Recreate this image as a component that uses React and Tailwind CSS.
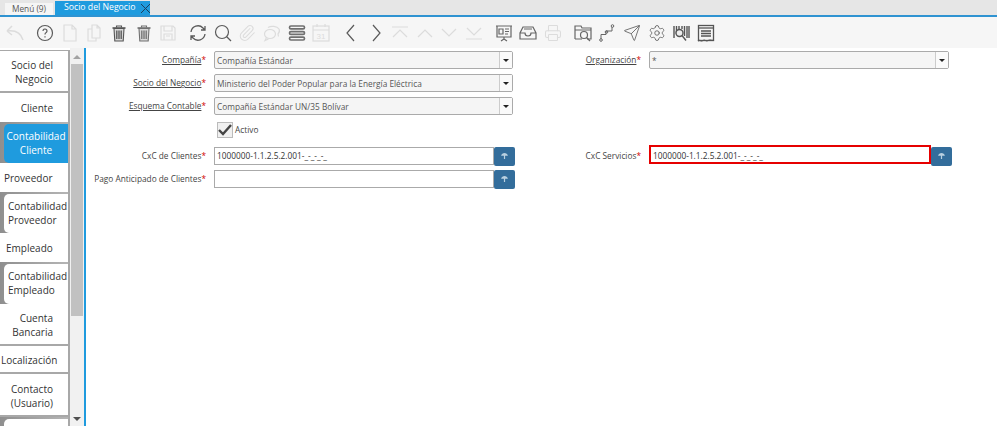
import React from "react";
import { Paperclip, Printer, Send, Settings } from "lucide-react";

const ACTIVE = "#5a5a5a";
const OFF = "#dcdcdc";

const Svg = ({ color = ACTIVE, w = 1.2, children }) => (
  <svg width="20" height="20" viewBox="0 0 20 20" fill="none" stroke={color} strokeWidth={w}>
    {children}
  </svg>
);

const Trash = ({ color }) => (
  <Svg color={color} w={1.1}>
    <path d="M3.500 5h13" strokeWidth="1.600" />
    <path d="M7.500 4.500V3h5v1.500" />
    <path d="M5 5.500l.8 12.500h8.400L15 5.500z" fill="#d8d8d8" />
    <path d="M7.800 7.500v8.500M10 7.500v8.500M12.200 7.500v8.500" strokeWidth="1.300" />
  </Svg>
);

const tools = [
  { icon: <Svg color={OFF} w={1.5}><path d="M2 8l5-5M2 8l5 4M2 8c8-1 14 2 16 9" /></Svg> },
  { gap: true, icon: <Svg><circle cx="10" cy="10" r="7.500" /><path d="M8 8a2 2 0 1 1 3.200 1.600c-.8.500-1.200.9-1.200 1.800M10 13.200v1.200" /></Svg> },
  { icon: <Svg color={OFF}><path d="M4 2h8l4 4v12H4zM12 2v4h4" /></Svg> },
  { icon: <Svg color={OFF}><path d="M8 2h5l3 3v10H8zM13 2v3h3M8 6H4v12h8v-3" /></Svg> },
  { icon: <Trash color="#555" /> },
  { icon: <Trash color="#707070" /> },
  { icon: <Svg color={OFF}><path d="M3 3h12l2 2v12H3zM6 3v5h8V3M6 17v-6h8v6M8 13h4" /></Svg> },
  { gap: true, icon: <Svg w={1.300}><path d="M3 9a7 7 0 0 1 12-4l2 2M17 3v4h-4M17 11a7 7 0 0 1-12 4l-2-2M3 17v-4h4" /></Svg> },
  { icon: <Svg w={1.200}><circle cx="9" cy="9" r="6.500" /><path d="M13.500 13.500L18 18" /></Svg> },
  { icon: <Paperclip size={18} color={OFF} strokeWidth={1.400} /> },
  { icon: <Svg color={OFF}><ellipse cx="8" cy="11" rx="5.500" ry="4.500" /><path d="M6 4.500c3-2 9-1.500 11 1.500 1 2 .5 3.500-1 5l.5 2.500M4.500 14.500l-1.500 3 3.500-1.500" /></Svg> },
  { icon: <Svg color="#707070" w={1.700}><rect x="2.500" y="3" width="15" height="2.800" rx="1.400" /><rect x="2.500" y="8.600" width="15" height="2.800" rx="1.400" /><rect x="2.500" y="14.200" width="15" height="2.800" rx="1.400" /></Svg> },
  { icon: <Svg color={OFF}><rect x="2" y="3" width="16" height="15" /><path d="M2 7h16M6 1v3M14 1v3" /><text x="10" y="16" textAnchor="middle" fontSize="8" fill={OFF} stroke="none" fontFamily="Liberation Sans">31</text></Svg> },
  { gap: true, icon: <Svg><path d="M13 2l-7 8 7 8" /></Svg> },
  { icon: <Svg><path d="M7 2l7 8-7 8" /></Svg> },
  { icon: <Svg color={OFF}><path d="M2 4h16M3 14l7-7 7 7" /></Svg> },
  { icon: <Svg color={OFF}><path d="M3 14l7-7 7 7" /></Svg> },
  { icon: <Svg color={OFF}><path d="M3 6l7 7 7-7" /></Svg> },
  { icon: <Svg color={OFF}><path d="M3 5l7 7 7-7M2 16h16" /></Svg> },
  { gap: true, icon: <Svg color="#666"><path d="M2 3h16M3 3v11h14V3M10 14v2M7 18l3-2 3 2" /><path d="M5 6h4v5H5zM11 6h4M11 8.500h4M11 11h3" /></Svg> },
  { icon: <Svg color="#666"><path d="M5 4h10l3 6v6H2v-6zM2 10h5a3 3 0 0 0 6 0h5M6 6h8" /></Svg> },
  { icon: <Printer size={18} color={OFF} strokeWidth={1.400} /> },
  { gap: true, icon: <Svg color="#666"><path d="M2 16V3h6l1 2h9v11h-4M2 16h7M2 7h16" /><circle cx="11" cy="12" r="3.500" /><path d="M13.500 14.500L17 18" /></Svg> },
  { icon: <Svg color="#666" w={1}><path d="M4 16v-4.500h5V8h6V4" /><circle cx="4" cy="17" r="1.300" /><circle cx="9.500" cy="9" r="1.300" /><circle cx="15.500" cy="3" r="1.300" /></Svg> },
  { icon: <Send size={18} color="#666" strokeWidth={1.200} /> },
  { icon: <Settings size={18} color="#666" strokeWidth={1.200} /> },
  { icon: <Svg color="#555" w={1.400}><path d="M3 3v12M5.500 3v8M8 3v3M11 3v3M13.500 3v10M16 3v12M18 3v12" /><circle cx="8.500" cy="10" r="3.500" fill="#eee" /><path d="M11 12.500l4 5" /></Svg> },
  { icon: <Svg color="#555" w={1.300}><rect x="2.500" y="2.500" width="15" height="15" /><path d="M2.500 5h15" /><path d="M5 8h10M5 10.500h10M5 13h10" strokeWidth="1.600" /><path d="M2 18c2-1.500 3 .5 5-.5s3 1 5 0 3 .5 6-.5" /></Svg> },
];

const SideTab = ({ className = "", lines, inner = false, selected = false, plain = false, align = "text-right pr-[15px]" }) =>
  inner ? (
    <div className={`flex w-full shrink-0 bg-gradient-to-r from-[#8f8f8f] to-[#b5b5b5] pl-[4px] pt-[2px] ${className}`}>
      <div className={`flex w-full flex-col justify-center overflow-hidden whitespace-nowrap rounded-l-[5px] pb-[2px] leading-[14px] ${selected ? "bg-[#1f9bde] text-white" : "bg-white text-[#333]"} ${align}`}>
        {lines.map((l) => <span key={l}>{l}</span>)}
      </div>
    </div>
  ) : (
    <div className={`flex w-full shrink-0 flex-col justify-center whitespace-nowrap bg-white leading-[14px] text-[#333] ${plain ? "" : "border-b-2 border-[#a8a8a8] pt-[2px]"} ${align} ${className}`}>
      {lines.map((l) => <span key={l}>{l}</span>)}
    </div>
  );

const Label = ({ text, link, className = "w-[120px]" }) => (
  <div className={`shrink-0 whitespace-nowrap pt-px text-right text-[#444] ${className}`}>
    <span className={link ? "underline" : ""}>{text}</span>
    <span className="text-[#d00000]">*</span>
  </div>
);

const Combo = ({ value, className = "w-[299px]" }) => (
  <div className={`flex h-[18px] items-stretch rounded-[2px] border border-[#aaa] bg-[#f5f5f5] ${className}`}>
    <span className="flex-1 pl-[2px] leading-[17px] text-[#555]">{value}</span>
    <span className="flex w-[13px] items-center justify-center border-l border-[#ccc] bg-[#fafafa]">
      <span className="h-0 w-0 border-x-[3px] border-t-[3px] border-x-transparent border-t-[#222]" />
    </span>
  </div>
);

const LookupBtn = () => (
  <span className="flex h-[19px] w-[21px] shrink-0 items-center justify-center rounded-[2px] bg-[#336d9b]">
    <svg width="7" height="6" viewBox="0 0 8 7" fill="#b9d0e0">
      <path d="M0 3.300C.6 1 2.200 0 4 0s3.400 1 4 3.300H4.700V7H3.300V3.300z" />
    </svg>
  </span>
);

const Lookup = ({ value, red = false, className = "w-[280px]" }) => (
  <div className="flex items-center">
    <div className={`truncate pl-[2px] text-[#333] ${red ? "mb-[3px] h-[19px] border-2 border-[#e60000] leading-[17px]" : "h-[18px] border border-[#aaa] leading-[16px]"} bg-white ${className}`}>
      {value}
    </div>
    <LookupBtn />
  </div>
);

const App = () => {
  return (
    <div className="flex h-[426px] w-[997px] flex-col overflow-hidden bg-white text-[8.3px]" style={{ fontFamily: '"Open Sans", sans-serif' }}>
      {/* tabs */}
      <div className="flex h-[17px] shrink-0 items-end gap-[2px] border-b-2 border-[#2f93d1] bg-[#e6e6e6] pl-[5px]">
        <div className="flex h-[12px] w-[48px] items-center justify-center bg-[#f5f5f5] text-[#555]">Menú (9)</div>
        <div className="flex h-[14px] w-[95px] items-center bg-[#1f9bde] pl-[9px] text-[8.700px] font-medium text-white">
          <span className="w-[77px] whitespace-nowrap">Socio del Negocio</span>
          <svg width="9" height="9" viewBox="0 0 9 9" stroke="#1d3f5c" strokeWidth="1"><path d="M0 0l9 9M9 0L0 9" /></svg>
        </div>
      </div>

      {/* toolbar */}
      <div className="flex h-[31px] shrink-0 items-center bg-[#f6f6f6] pl-[3px]">
        {tools.map((t, i) => (
          <div key={i} className={`flex w-[24.67px] shrink-0 items-center justify-center ${t.gap ? "ml-[5px]" : ""}`}>
            {t.icon}
          </div>
        ))}
      </div>

      <div className="flex min-h-0 flex-1">
        {/* side tabs */}
        <div className="mt-[2px] flex w-[70px] shrink-0 flex-col overflow-hidden border-r-2 border-t border-[#a8a8a8] text-[10px]">
          <SideTab className="h-[42px]" lines={["Socio del", "Negocio"]} />
          <SideTab plain className="h-[29px]" lines={["Cliente"]} />
          <SideTab inner selected className="h-[41px]" align="text-center" lines={["Contabilidad", "Cliente"]} />
          <SideTab plain className="h-[29px] pl-[4px]" align="text-left" lines={["Proveedor"]} />
          <SideTab inner className="h-[41px]" align="text-left pl-[4px]" lines={["Contabilidad", "Proveedor"]} />
          <SideTab plain className="h-[29px] pl-[6px]" align="text-left" lines={["Empleado"]} />
          <SideTab inner className="h-[42px]" align="text-left pl-[4px]" lines={["Contabilidad", "Empleado"]} />
          <SideTab className="h-[42px]" lines={["Cuenta", "Bancaria"]} />
          <SideTab className="h-[28px] pl-[1px]" align="text-left" lines={["Localización"]} />
          <SideTab className="h-[43px]" lines={["Contacto", "(Usuario)"]} />
          <SideTab inner className="h-[41px]" lines={[""]} />
        </div>

        {/* scrollbar */}
        <div className="flex w-[14px] shrink-0 flex-col items-center bg-[#f1f1f1]">
          <span className="mt-[7px] h-0 w-0 border-x-[4px] border-b-[4px] border-x-transparent border-b-[#a3a3a3]" />
          <span className="mt-[5px] h-[252px] w-[12px] bg-[#c1c1c1]" />
          <span className="mt-auto mb-[5px] h-0 w-0 border-x-[4px] border-t-[4px] border-x-transparent border-t-[#505050]" />
        </div>
        <div className="w-[2px] shrink-0 bg-[#1f9bde]" />

        {/* form */}
        <div className="flex min-w-0 flex-1 flex-col pt-[3px]">
          <div className="flex h-[18px] items-center">
            <Label text="Compañía" link />
            <div className="ml-[8px]"><Combo value="Compañía Estándar" /></div>
            <Label text="Organización" link className="w-[128px]" />
            <div className="ml-[8px]"><Combo value="*" className="w-[300px]" /></div>
          </div>
          <div className="mt-[5px] flex h-[18px] items-center">
            <Label text="Socio del Negocio" link />
            <div className="ml-[8px]"><Combo value="Ministerio del Poder Popular para la Energía Eléctrica" /></div>
          </div>
          <div className="mt-[5px] flex h-[18px] items-center">
            <Label text="Esquema Contable" link />
            <div className="ml-[8px]"><Combo value="Compañía Estándar UN/35 Bolívar" /></div>
          </div>
          <div className="mt-[6px] flex h-[18px] items-center pl-[131px]">
            <span className="flex h-[16px] w-[16px] items-center justify-center border border-[#bbb] bg-[#f0f0f0]">
              <svg width="14" height="12" viewBox="0 0 14 12" fill="none" stroke="#444" strokeWidth="2.400"><path d="M1 6l4 4 8-9" /></svg>
            </span>
            <span className="ml-[2px] text-[#444]">Activo</span>
          </div>
          <div className="mt-[8px] flex h-[18px] items-center">
            <Label text="CxC de Clientes" />
            <div className="ml-[8px]"><Lookup value="1000000-1.1.2.5.2.001-_-_-_-_" /></div>
            <Label text="CxC Servicios" className="w-[126px]" />
            <div className="ml-[8px]"><Lookup red value="1000000-1.1.2.5.2.001-_-_-_-_" className="w-[282px]" /></div>
          </div>
          <div className="mt-[5px] flex h-[18px] items-center">
            <Label text="Pago Anticipado de Clientes" />
            <div className="ml-[8px]"><Lookup value="" /></div>
          </div>
        </div>
      </div>
    </div>
  );
};

export default App;
